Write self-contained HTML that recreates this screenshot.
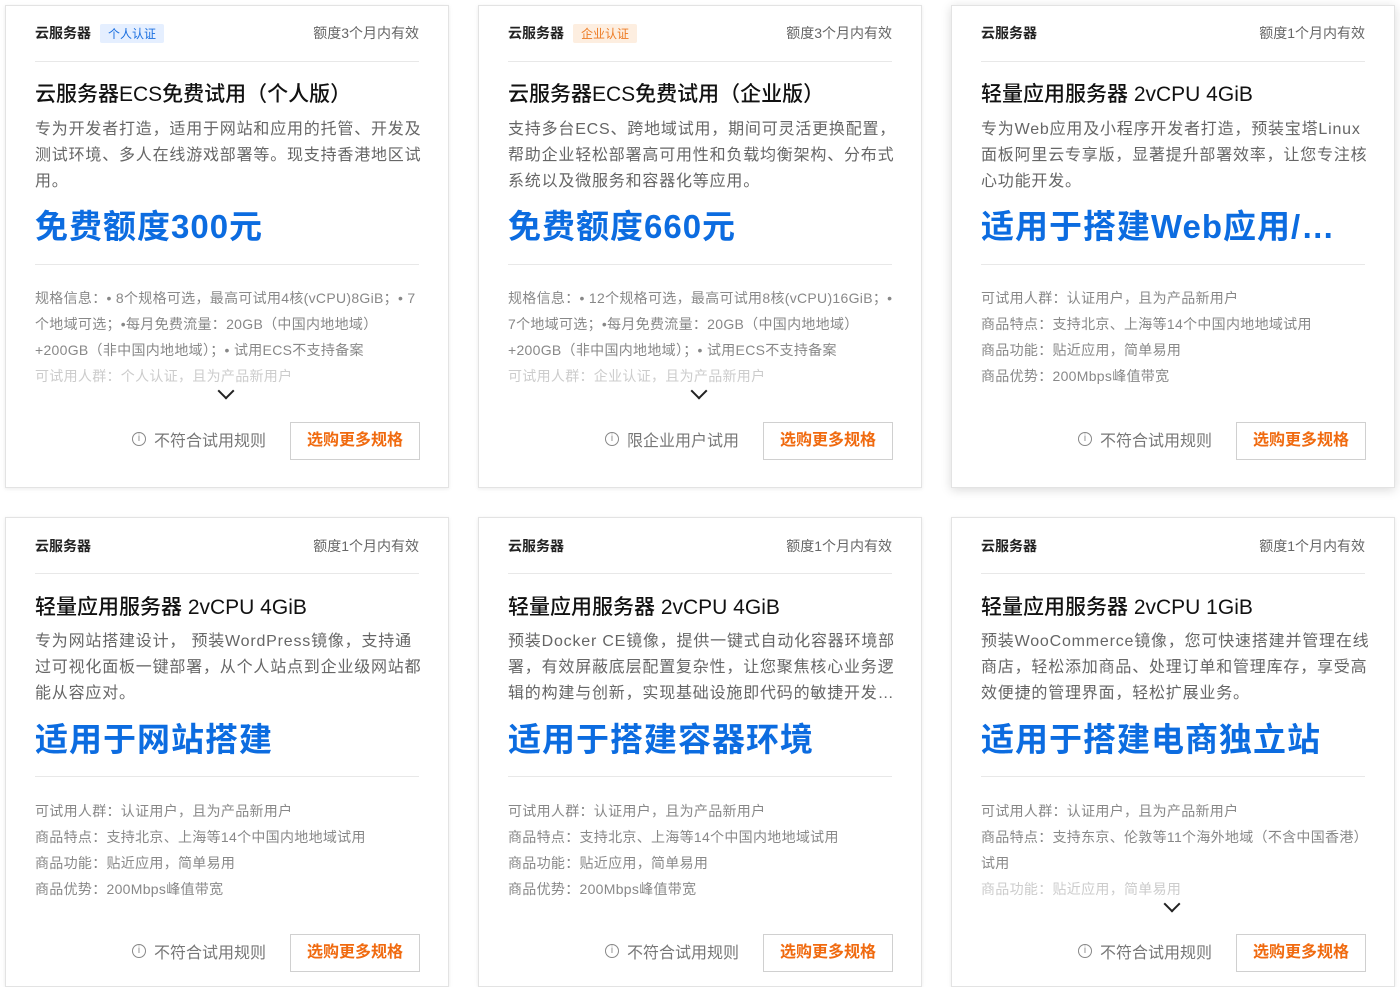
<!DOCTYPE html>
<html><head><meta charset="utf-8"><style>
*{box-sizing:border-box;margin:0;padding:0}
body{width:1400px;height:979px;background:#fff;position:relative;overflow:hidden;font-family:"Liberation Sans","Noto Sans CJK SC",sans-serif}
.card{position:absolute;width:444px;border:1px solid #e3e3e3;background:#fff;box-shadow:0 1px 4px rgba(0,0,0,.08)}
.r1{top:5px;height:483px}.r2{top:517px;height:470px}
.c1{left:5px}.c2{left:478px}.c3{left:951px}
.hov{box-shadow:0 2px 10px rgba(0,0,0,.15)}
.hd{position:absolute;left:29px;right:29px;top:16px;height:22px;display:flex;align-items:center;font-size:14px}
.hd b{font-weight:bold;color:#222;font-size:14px}
.tag{margin-left:9px;font-size:12px;padding:1px 8px;border-radius:2px}
.tp{background:#e5efff;color:#1a6fe0}.te{background:#fdeee0;color:#ed7a22}
.hd .rt{margin-left:auto;color:#666;font-size:14px}
.ln{position:absolute;left:29px;right:29px;height:1px;background:#e8e8e8}
.ttl{position:absolute;left:29px;right:20px;font-size:21px;color:#111;white-space:nowrap;font-weight:500}
.ds{position:absolute;left:29px;right:24px;font-size:16px;letter-spacing:.8px;line-height:26px;color:#666;height:78px;overflow:hidden}
.big{position:absolute;left:29px;right:40px;font-size:33px;font-weight:bold;color:#0c6ce0;white-space:nowrap;overflow:hidden;text-overflow:ellipsis;letter-spacing:1px}
.sp{position:absolute;left:29px;right:26px;font-size:14px;letter-spacing:.3px;line-height:26px;color:#888}
.fd{color:#ccc}
.chev{position:absolute;left:214px;width:12px;height:12px;border-right:2px solid #222;border-bottom:2px solid #222;transform:rotate(45deg)}
.rule{position:absolute;right:182px;font-size:16px;color:#777;display:flex;align-items:center;gap:8px}
.rule i{display:inline-block;width:14px;height:14px;border:1px solid #888;border-radius:50%;font-style:normal;font-size:10px;line-height:12px;text-align:center;color:#888}
.btn{position:absolute;right:28px;width:130px;height:38px;border:1px solid #d0d0d0;color:#f06a0f;font-size:16px;font-weight:bold;text-align:center;line-height:36px}
</style></head><body>

<div class="card r1 c1">
<div class="hd"><b>云服务器</b><span class="tag tp">个人认证</span><span class="rt">额度3个月内有效</span></div>
<div class="ln" style="top:55px"></div>
<div class="ttl" style="top:72px">云服务器ECS免费试用（个人版）</div>
<div class="ds" style="top:111px">专为开发者打造，适用于网站和应用的托管、开发及测试环境、多人在线游戏部署等。现支持香港地区试用。</div>
<div class="big" style="top:194px">免费额度300元</div>
<div class="ln" style="top:258px"></div>
<div class="sp" style="top:279px">规格信息：• 8个规格可选，最高可试用4核(vCPU)8GiB；• 7个地域可选；•每月免费流量：20GB（中国内地地域）+200GB（非中国内地地域）；• 试用ECS不支持备案<br><span class="fd">可试用人群：个人认证，且为产品新用户</span></div>
<div class="chev" style="top:379px"></div>
<div class="rule" style="top:421px"><i>i</i>不符合试用规则</div>
<div class="btn" style="top:416px">选购更多规格</div>
</div>

<div class="card r1 c2">
<div class="hd"><b>云服务器</b><span class="tag te">企业认证</span><span class="rt">额度3个月内有效</span></div>
<div class="ln" style="top:55px"></div>
<div class="ttl" style="top:72px">云服务器ECS免费试用（企业版）</div>
<div class="ds" style="top:111px">支持多台ECS、跨地域试用，期间可灵活更换配置，帮助企业轻松部署高可用性和负载均衡架构、分布式系统以及微服务和容器化等应用。</div>
<div class="big" style="top:194px">免费额度660元</div>
<div class="ln" style="top:258px"></div>
<div class="sp" style="top:279px">规格信息：• 12个规格可选，最高可试用8核(vCPU)16GiB；• 7个地域可选；•每月免费流量：20GB（中国内地地域）+200GB（非中国内地地域）；• 试用ECS不支持备案<br><span class="fd">可试用人群：企业认证，且为产品新用户</span></div>
<div class="chev" style="top:379px"></div>
<div class="rule" style="top:421px"><i>i</i>限企业用户试用</div>
<div class="btn" style="top:416px">选购更多规格</div>
</div>

<div class="card r1 c3 hov">
<div class="hd"><b>云服务器</b><span class="rt">额度1个月内有效</span></div>
<div class="ln" style="top:55px"></div>
<div class="ttl" style="top:72px">轻量应用服务器 2vCPU 4GiB</div>
<div class="ds" style="top:111px">专为Web应用及小程序开发者打造，预装宝塔Linux面板阿里云专享版，显著提升部署效率，让您专注核心功能开发。</div>
<div class="big" style="top:194px">适用于搭建Web应用/小程序</div>
<div class="ln" style="top:258px"></div>
<div class="sp" style="top:279px">可试用人群：认证用户，且为产品新用户<br>商品特点：支持北京、上海等14个中国内地地域试用<br>商品功能：贴近应用，简单易用<br>商品优势：200Mbps峰值带宽</div>
<div class="rule" style="top:421px"><i>i</i>不符合试用规则</div>
<div class="btn" style="top:416px">选购更多规格</div>
</div>

<div class="card r2 c1">
<div class="hd" style="top:17px"><b>云服务器</b><span class="rt">额度1个月内有效</span></div>
<div class="ln" style="top:55px"></div>
<div class="ttl" style="top:73px">轻量应用服务器 2vCPU 4GiB</div>
<div class="ds" style="top:111px">专为网站搭建设计， 预装WordPress镜像，支持通过可视化面板一键部署，从个人站点到企业级网站都能从容应对。</div>
<div class="big" style="top:195px">适用于网站搭建</div>
<div class="ln" style="top:258px"></div>
<div class="sp" style="top:280px">可试用人群：认证用户，且为产品新用户<br>商品特点：支持北京、上海等14个中国内地地域试用<br>商品功能：贴近应用，简单易用<br>商品优势：200Mbps峰值带宽</div>
<div class="rule" style="top:421px"><i>i</i>不符合试用规则</div>
<div class="btn" style="top:416px">选购更多规格</div>
</div>

<div class="card r2 c2">
<div class="hd" style="top:17px"><b>云服务器</b><span class="rt">额度1个月内有效</span></div>
<div class="ln" style="top:55px"></div>
<div class="ttl" style="top:73px">轻量应用服务器 2vCPU 4GiB</div>
<div class="ds" style="top:111px">预装Docker CE镜像，提供一键式自动化容器环境部署，有效屏蔽底层配置复杂性，让您聚焦核心业务逻辑的构建与创新，实现基础设施即代码的敏捷开发…</div>
<div class="big" style="top:195px">适用于搭建容器环境</div>
<div class="ln" style="top:258px"></div>
<div class="sp" style="top:280px">可试用人群：认证用户，且为产品新用户<br>商品特点：支持北京、上海等14个中国内地地域试用<br>商品功能：贴近应用，简单易用<br>商品优势：200Mbps峰值带宽</div>
<div class="rule" style="top:421px"><i>i</i>不符合试用规则</div>
<div class="btn" style="top:416px">选购更多规格</div>
</div>

<div class="card r2 c3">
<div class="hd" style="top:17px"><b>云服务器</b><span class="rt">额度1个月内有效</span></div>
<div class="ln" style="top:55px"></div>
<div class="ttl" style="top:73px">轻量应用服务器 2vCPU 1GiB</div>
<div class="ds" style="top:111px">预装WooCommerce镜像，您可快速搭建并管理在线商店，轻松添加商品、处理订单和管理库存，享受高效便捷的管理界面，轻松扩展业务。</div>
<div class="big" style="top:195px">适用于搭建电商独立站</div>
<div class="ln" style="top:258px"></div>
<div class="sp" style="top:280px">可试用人群：认证用户，且为产品新用户<br>商品特点：支持东京、伦敦等11个海外地域（不含中国香港）试用<br><span class="fd">商品功能：贴近应用，简单易用</span></div>
<div class="chev" style="top:380px"></div>
<div class="rule" style="top:421px"><i>i</i>不符合试用规则</div>
<div class="btn" style="top:416px">选购更多规格</div>
</div>

</body></html>
